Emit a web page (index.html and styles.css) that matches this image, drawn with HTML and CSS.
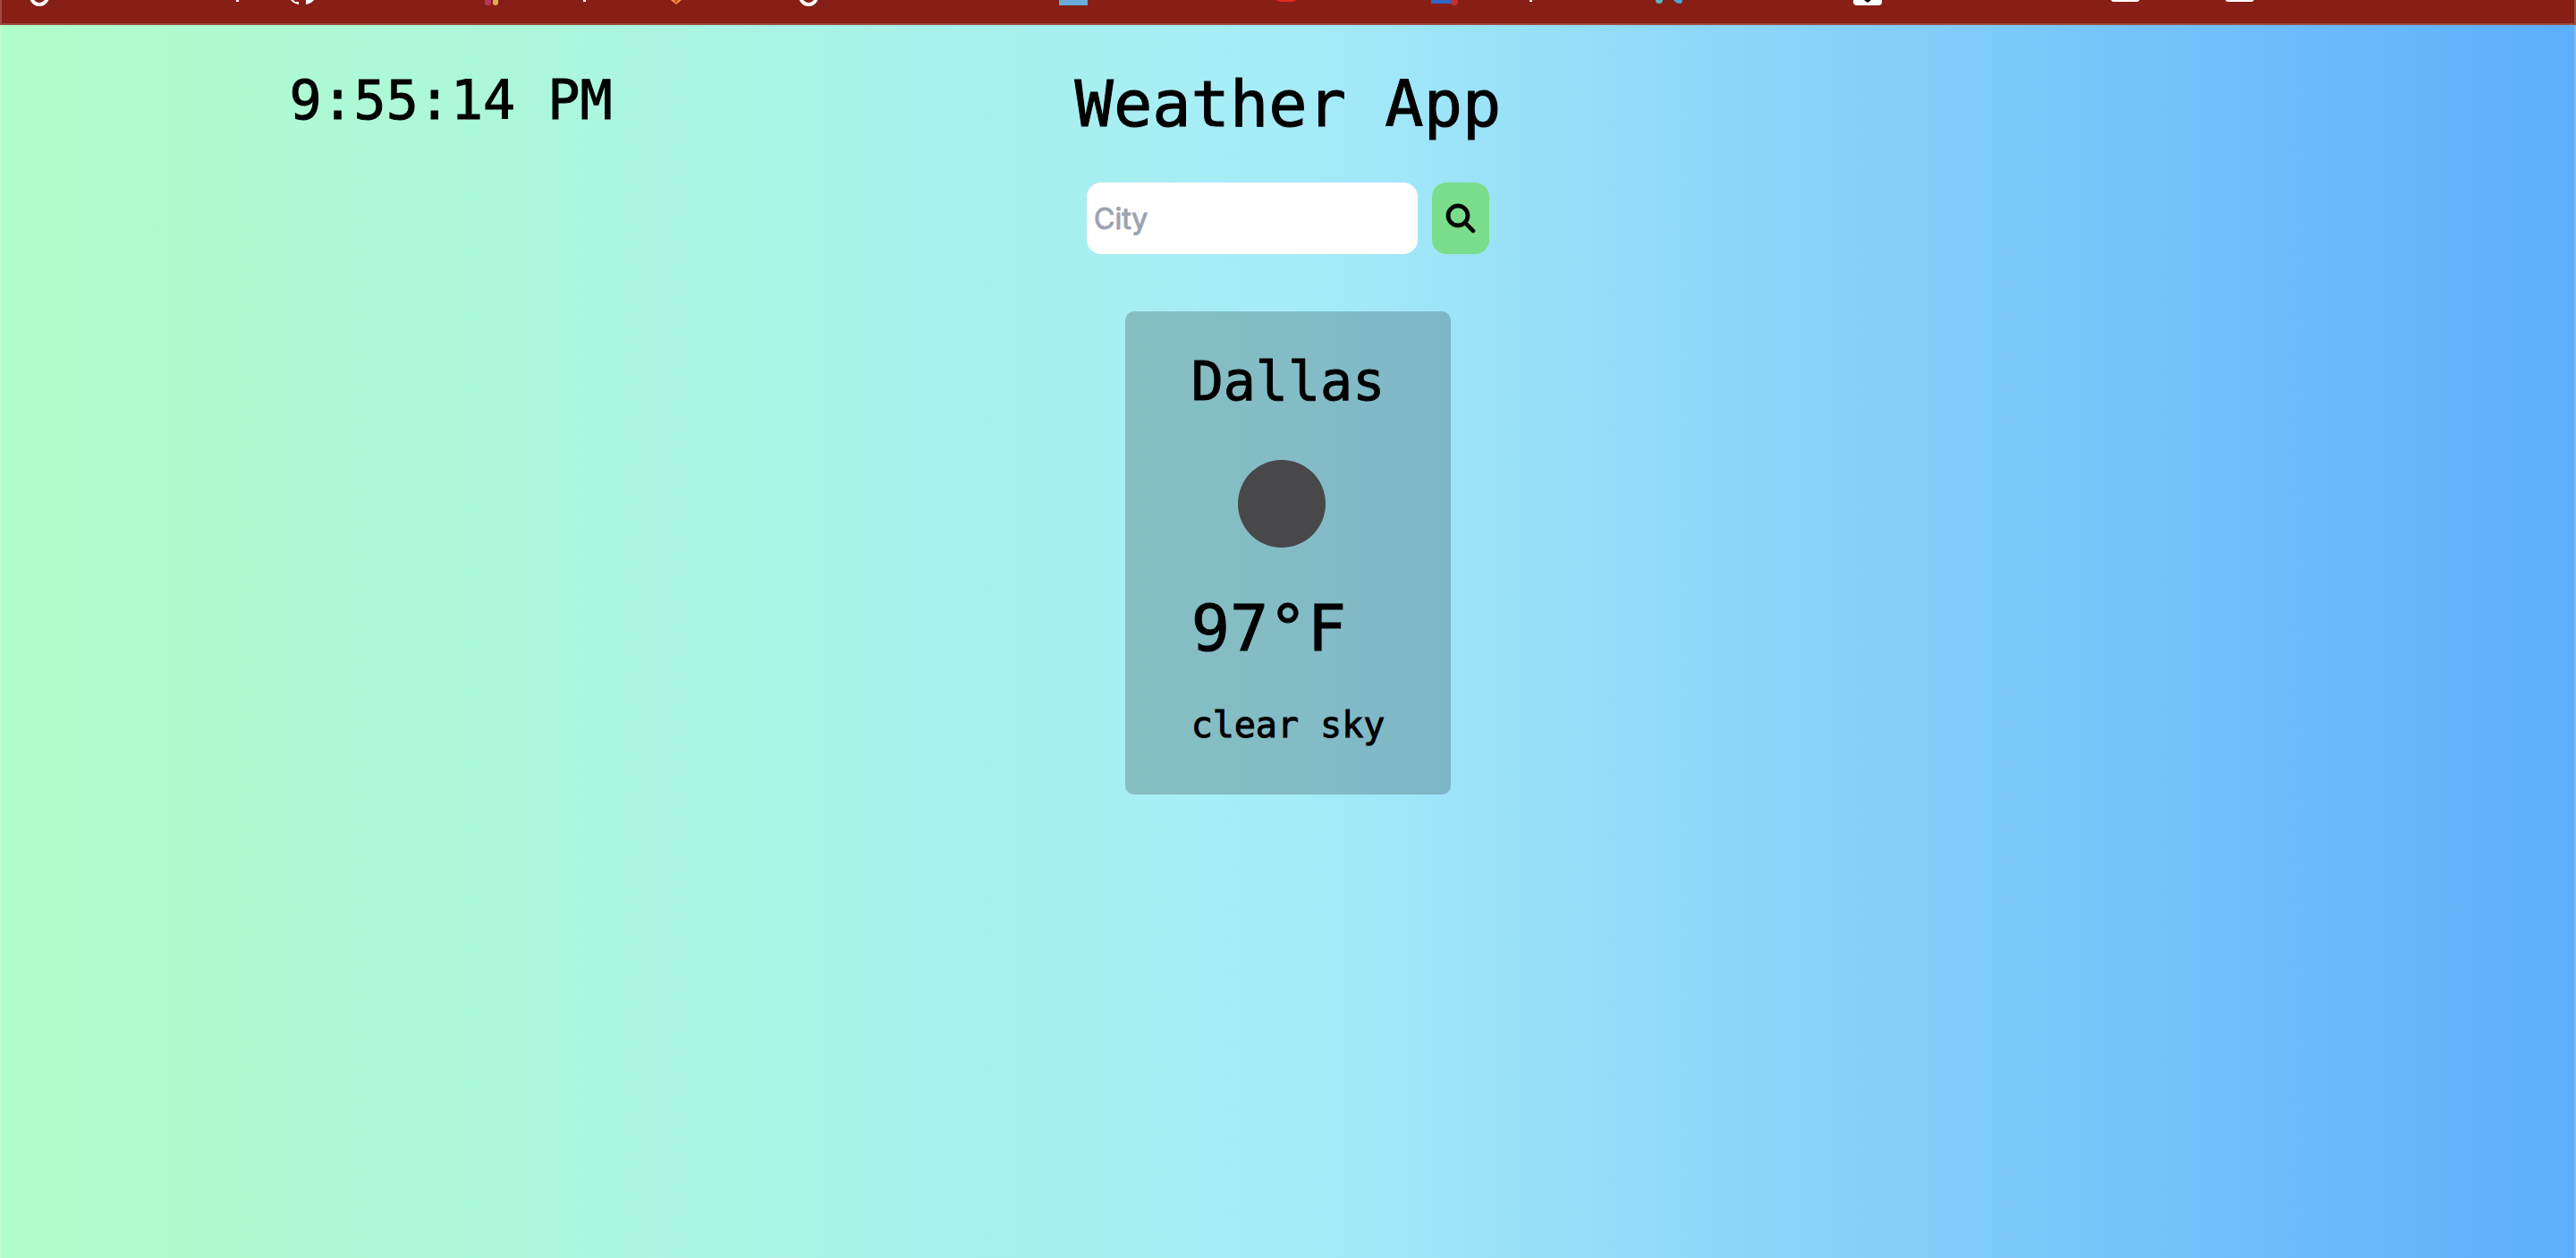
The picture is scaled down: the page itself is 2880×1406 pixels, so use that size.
FILE: index.html
```html
<!DOCTYPE html>
<html lang="en">
<head>
<meta charset="utf-8">
<meta name="viewport" content="width=device-width, initial-scale=1">
<title>Weather App</title>
<link rel="stylesheet" href="styles.css">
</head>
<body>
<div class="toolbar">
  <svg class="bookmarks" width="2560" height="26" viewBox="0 0 2560 26" aria-hidden="true">
    <g fill="none" stroke="#fff" stroke-width="4">
      <circle cx="44" cy="-4" r="9"/>
      <circle cx="904" cy="-4" r="9"/>
    </g>
    <path fill="#fff" d="M264 0h3v2h-3zM652 0h3v2h-3zM1710 0h3v2h-3z"/>
    <path fill="#fff" d="M325 0h3l2 2h4v3q-6-1-9-5zM342 0h9q-3 4-9 5z"/>
    <rect x="542" y="-8" width="7" height="14" rx="3" fill="#b83559"/>
    <rect x="551" y="-8" width="6" height="14" rx="3" fill="#dfb049"/>
    <path fill="#f0a040" d="M750 0h12l-6 5z"/>
    <path fill="#d9542b" d="M753 0h6l-3 4z"/>
    <rect x="1184" y="-8" width="32" height="14" fill="#68abdc"/>
    <rect x="1426" y="-8" width="24" height="10" rx="5" fill="#e5291d"/>
    <rect x="1600" y="-8" width="23" height="12" fill="#2d68c4"/>
    <rect x="1622" y="-8" width="8" height="14" rx="4" fill="#c62f2c"/>
    <path fill="#58b9bd" d="M1851 0h8q0 4-4 4t-4-4z"/>
    <path fill="#4aa5d8" d="M1871 0h10q0 4-3 4-4 0-7-4z"/>
    <rect x="2072" y="-20" width="32" height="26" rx="4" fill="#fff"/>
    <path d="M2084 0h8l-4 3z"/>
    <rect x="2360" y="-20" width="32" height="22" rx="3" fill="#fff"/>
    <rect x="2488" y="-20" width="32" height="22" rx="3" fill="#fff"/>
  </svg>
</div>
<div class="page">
  <time class="clock">9:55:14 PM</time>
  <main class="weather">
    <h1 class="title">Weather App</h1>
    <form class="search">
      <input class="city-input" type="text" placeholder="City" aria-label="City">
      <button class="search-button" type="button" aria-label="Search">
        <svg width="32" height="32" viewBox="0 0 512 512" aria-hidden="true"><path stroke="#000" stroke-width="12" d="M416 208c0 45.900-14.900 88.300-40 122.700L502.600 457.400c12.500 12.500 12.500 32.800 0 45.300s-32.800 12.500-45.300 0L330.700 376c-34.400 25.200-76.800 40-122.700 40C93.100 416 0 322.900 0 208S93.100 0 208 0S416 93.100 416 208zM208 352a144 144 0 1 0 0-288 144 144 0 1 0 0 288z"/></svg>
      </button>
    </form>
    <section class="card">
      <h2 class="city">Dallas</h2>
      <svg class="condition" width="200" height="200" viewBox="0 0 200 200" role="img" aria-label="clear sky"><circle cx="101" cy="101" r="49" fill="#48484a"/></svg>
      <p class="temperature">97°F</p>
      <p class="description">clear sky</p>
    </section>
  </main>
</div>
</body>
</html>
```
FILE: styles.css
```css
* { box-sizing: border-box; }

body {
  margin: 0;
  min-height: 100vh;
  display: flex;
  flex-direction: column;
  background: linear-gradient(to right, #b0fec9, #a6ecf8 50%, #5daefb);
  color: #000;
  font-family: "DejaVu Sans Mono", monospace;
  -webkit-text-stroke: 1px;
  box-shadow: inset 2px 0 rgba(255, 255, 255, 0.2), inset -2px 0 rgba(255, 255, 255, 0.2);
}

h1, h2, p { margin: 0; font-weight: 400; }

.toolbar {
  height: 28px;
  overflow: hidden;
  background: #871f17;
  border-bottom: 2px solid #9f4c45;
  box-shadow: inset 2px 0 rgba(255, 255, 255, 0.2), inset -2px 0 rgba(255, 255, 255, 0.2);
}

.bookmarks { display: block; }

.page {
  flex: 1;
  display: grid;
  grid-template-columns: 35fr 30fr 35fr;
  align-items: start;
  padding-top: 48px;
}

.clock {
  justify-self: center;
  font-size: 60px;
  line-height: 72px;
}

.weather {
  display: flex;
  flex-direction: column;
  align-items: center;
}

.title {
  font-size: 72px;
  line-height: 80px;
}

.search {
  display: flex;
  gap: 16px;
  margin: 48px 0 64px;
}

.city-input {
  width: 370px;
  height: 80px;
  padding: 0 8px;
  border: 0;
  border-radius: 16px;
  background: #fff;
  font-family: Inter, sans-serif;
  font-size: 32px;
}

.city-input::placeholder { color: #9ca3af; opacity: 1; }

.search-button {
  display: flex;
  align-items: center;
  justify-content: center;
  width: 64px;
  padding: 0;
  border: 0;
  border-radius: 16px;
  background: #7add8b;
}

.search-button svg { overflow: visible; }

.card {
  padding: 42px 74px 50px;
  border-radius: 10px;
  background: rgba(0, 0, 0, 0.2);
}

.city {
  font-size: 60px;
  line-height: 72px;
}

.condition { display: block; }

.temperature {
  margin-bottom: 40px;
  font-size: 72px;
  line-height: 80px;
}

.description {
  font-size: 40px;
  line-height: 56px;
}
```
